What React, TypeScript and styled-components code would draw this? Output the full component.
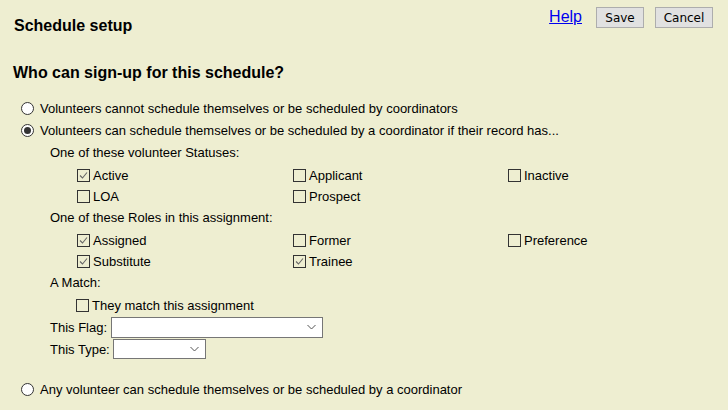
import React from "react";
import styled, { createGlobalStyle } from "styled-components";

const Global = createGlobalStyle`
  html, body { margin: 0; padding: 0; background: #eeeed1; }
  body { font-family: "Liberation Sans", Arial, sans-serif; color: #000; }
`;

const Page = styled.div`
  width: 728px;
  height: 410px;
  box-sizing: border-box;
  background: #eeeed1;
  overflow: hidden;
`;

const Header = styled.header`
  display: flex;
  justify-content: space-between;
  align-items: flex-start;
  padding: 7px 15px 0 14px;
  height: 50px;
  box-sizing: border-box;
`;

const Title = styled.h1`
  margin: 10px 0 0;
  font-size: 16px;
  font-weight: bold;
  line-height: 18px;
`;

const Actions = styled.div`
  display: flex;
  align-items: flex-start;
`;

const HelpLink = styled.a`
  font-size: 16px;
  line-height: 18px;
  margin-top: 1px;
  margin-right: 14px;
  color: #0000ee;
  text-decoration: underline;
  cursor: pointer;
`;

const Button = styled.button<{ $w: number }>`
  width: ${(p) => p.$w}px;
  height: 21px;
  margin-left: ${(p) => (p.$w === 58 ? 11 : 0)}px;
  padding: 0;
  background: #e1e1e1;
  border: 1px solid #adadad;
  border-radius: 0;
  font-family: "DejaVu Sans", Tahoma, sans-serif;
  font-size: 12px;
  color: #000;
`;

const Heading = styled.h2`
  margin: 14px 0 0 13px;
  font-size: 16px;
  font-weight: bold;
  line-height: 18px;
`;

const Body = styled.div`
  padding: 15px 0 0 21px;
  font-size: 13px;
`;

const Row = styled.div<{ $mt?: number; $indent?: number }>`
  display: flex;
  align-items: center;
  height: 22px;
  margin-top: ${(p) => p.$mt ?? 0}px;
  padding-left: ${(p) => p.$indent ?? 0}px;
`;

const RadioCircle = styled.span<{ $on?: boolean }>`
  width: 11px;
  height: 11px;
  border: 1px solid #333;
  border-radius: 50%;
  background: #fff;
  display: inline-flex;
  align-items: center;
  justify-content: center;
  margin-right: 6px;
  flex: none;
  &::after {
    content: "";
    width: 7px;
    height: 7px;
    border-radius: 50%;
    background: ${(p) => (p.$on ? "#333" : "transparent")};
  }
`;

const Grid = styled.div<{ $indent?: number }>`
  display: grid;
  grid-template-columns: 216px 215px 200px;
  padding-left: ${(p) => p.$indent ?? 56}px;
`;

const CheckItem = styled.label`
  display: flex;
  align-items: center;
  height: 21px;
`;

const Box = styled.span`
  width: 11px;
  height: 11px;
  border: 1px solid #333;
  display: inline-flex;
  align-items: center;
  justify-content: center;
  margin-right: 3px;
  flex: none;
`;

const GroupLabel = styled.div<{ $mt?: number }>`
  height: 23px;
  line-height: 22px;
  padding-left: 29px;
  margin-top: ${(p) => p.$mt ?? 0}px;
`;

const SelectBox = styled.span<{ $w: number; $h: number; $ml: number }>`
  width: ${(p) => p.$w}px;
  height: ${(p) => p.$h}px;
  box-sizing: border-box;
  border: 1px solid #767676;
  background: #fff;
  display: inline-flex;
  justify-content: flex-end;
  align-items: center;
  padding-right: 6px;
  margin-left: ${(p) => p.$ml}px;
`;

const Check = ({ on }: { on?: boolean }) => (
  <Box>
    {on && (
      <svg width="9" height="9" viewBox="0 0 9 9">
        <path d="M1 4.5 L3.5 7 L8 1.5" fill="none" stroke="#666" strokeWidth="1.1" />
      </svg>
    )}
  </Box>
);

const Chevron = () => (
  <svg width="9" height="6" viewBox="0 0 9 6">
    <path d="M0.5 1 L4.5 5 L8.5 1" fill="none" stroke="#555" strokeWidth="1" />
  </svg>
);

const CB = ({ on, label }: { on?: boolean; label: string }) => (
  <CheckItem>
    <Check on={on} />
    {label}
  </CheckItem>
);

export default function App() {
  return (
    <Page>
      <Global />
      <Header>
        <Title>Schedule setup</Title>
        <Actions>
          <HelpLink>Help</HelpLink>
          <Button $w={48}>Save</Button>
          <Button $w={58}>Cancel</Button>
        </Actions>
      </Header>
      <Heading>Who can sign-up for this schedule?</Heading>
      <Body>
        <Row>
          <RadioCircle />
          Volunteers cannot schedule themselves or be scheduled by coordinators
        </Row>
        <Row>
          <RadioCircle $on />
          Volunteers can schedule themselves or be scheduled by a coordinator if their record has...
        </Row>
        <GroupLabel $mt={1}>One of these volunteer Statuses:</GroupLabel>
        <Grid>
          <CB on label="Active" />
          <CB label="Applicant" />
          <CB label="Inactive" />
          <CB label="LOA" />
          <CB label="Prospect" />
        </Grid>
        <GroupLabel>One of these Roles in this assignment:</GroupLabel>
        <Grid>
          <CB on label="Assigned" />
          <CB label="Former" />
          <CB label="Preference" />
          <CB on label="Substitute" />
          <CB on label="Trainee" />
        </Grid>
        <GroupLabel>A Match:</GroupLabel>
        <Grid $indent={55}>
          <CB label="They match this assignment" />
        </Grid>
        <Row $indent={29}>
          This Flag:
          <SelectBox $w={212} $h={21} $ml={4}>
            <Chevron />
          </SelectBox>
        </Row>
        <Row $indent={29}>
          This Type:
          <SelectBox $w={93} $h={20} $ml={3}>
            <Chevron />
          </SelectBox>
        </Row>
        <Row $mt={18}>
          <RadioCircle />
          Any volunteer can schedule themselves or be scheduled by a coordinator
        </Row>
      </Body>
    </Page>
  );
}
